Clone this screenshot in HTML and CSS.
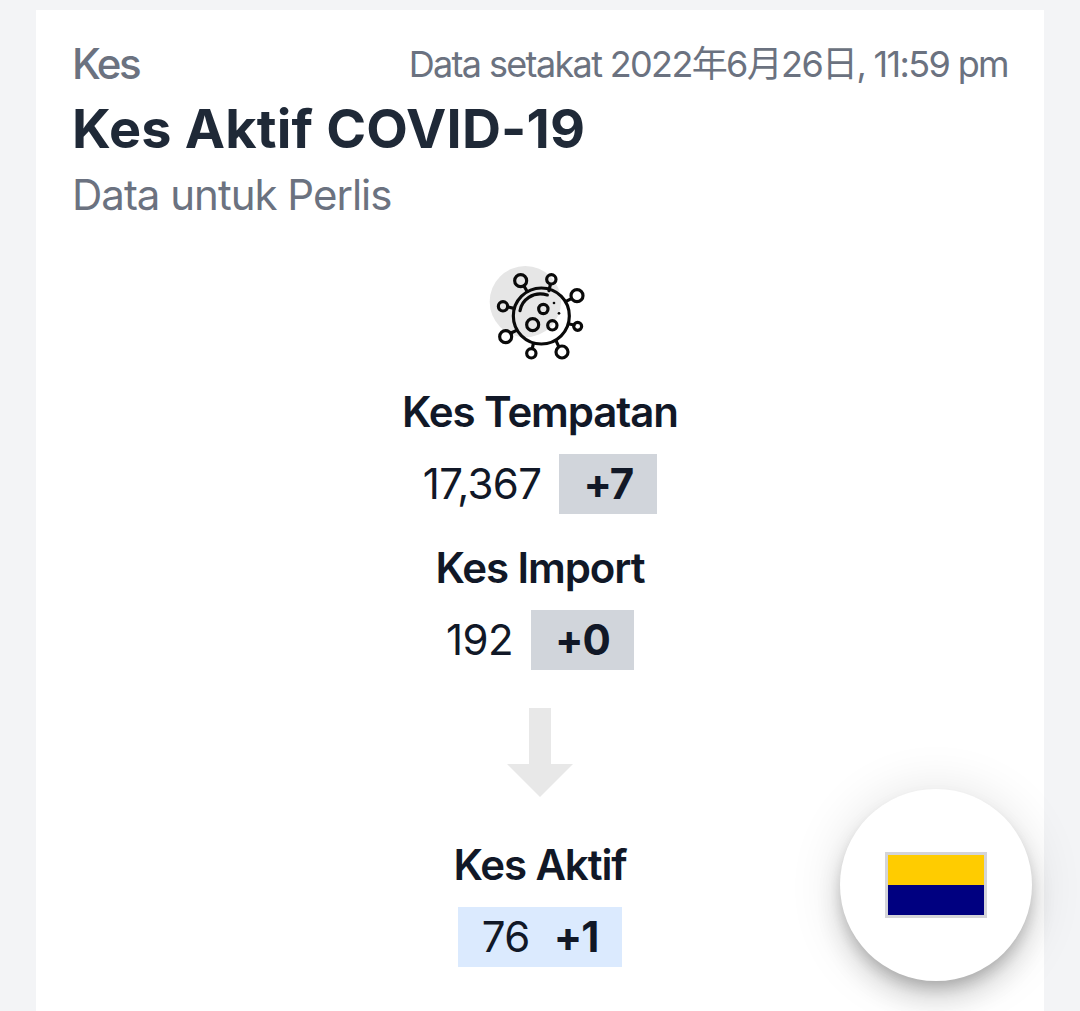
FILE: index.html
```
<!DOCTYPE html>
<html lang="ms">
<head>
  <meta charset="UTF-8" />
  <meta name="viewport" content="width=device-width, initial-scale=1.0"/>
  <title>Kes Aktif COVID-19</title>
  <link rel="stylesheet" href="styles.css">
</head>
<body>
  <main class="card">
    <header class="card-header">
      <div class="top-row">
        <span class="category">Kes</span>
        <span class="updated">Data setakat 2022年6月26日, 11:59 pm</span>
      </div>
      <h1>Kes Aktif COVID-19</h1>
      <p class="subtitle">Data untuk Perlis</p>
    </header>

    <section class="flow">
      <svg class="virus" viewBox="0 24 360 288" fill="none" stroke="#0a0a0a" stroke-width="9.500" stroke-linecap="round">
        <circle cx="136" cy="137" r="107" fill="#e6e6e6" stroke="none"/>
        <circle cx="184" cy="180" r="84"/>
        <path d="M120 164c5-31 38-60 82-47"/>
        <path d="M132 90l9 16M211 86l-4 18M274 128l-16 8M268 204l14 3M229 256l7 15M160 263l-3 14M108 224l-15 7M84 153l18 4"/>
        <circle cx="122" cy="74" r="18"/>
        <circle cx="214" cy="70" r="14"/>
        <circle cx="291" cy="119" r="18"/>
        <circle cx="293" cy="211" r="12"/>
        <circle cx="246" cy="288" r="18"/>
        <circle cx="154" cy="292" r="14"/>
        <circle cx="77" cy="242" r="18"/>
        <circle cx="69" cy="151" r="14"/>
        <circle cx="190" cy="159" r="14"/>
        <circle cx="158" cy="206" r="18"/>
        <circle cx="217" cy="208" r="14"/>
        <g fill="#0a0a0a" stroke="none">
          <circle cx="222" cy="141" r="4"/>
          <circle cx="237" cy="172" r="4"/>
        </g>
      </svg>

      <div class="stat">
        <h2>Kes Tempatan</h2>
        <div class="values">
          <span>17,367</span>
          <strong class="badge">+7</strong>
        </div>
      </div>

      <div class="stat">
        <h2>Kes Import</h2>
        <div class="values">
          <span>192</span>
          <strong class="badge">+0</strong>
        </div>
      </div>

      <svg class="arrow" viewBox="0 0 66 90">
        <path d="M22 0h22v56h22L33 89 0 56h22z" fill="#e8e8e8"/>
      </svg>

      <div class="stat">
        <h2>Kes Aktif</h2>
        <div class="values active">
          <span>76</span>
          <strong>+1</strong>
        </div>
      </div>
    </section>
  </main>

  <button class="state-button" aria-label="Perlis">
    <span class="flag"></span>
  </button>
</body>
</html>
```

FILE: styles.css
```
* {
  box-sizing: border-box;
}

body {
  margin: 0;
  padding: 10px 36px 0;
  height: 1011px;
  overflow: hidden;
  background-color: #f3f4f6;
  color: #111827;
  font-family: Inter, "Noto Sans CJK JP", sans-serif;
  font-size: 42px;
  line-height: 60px;
}

h1, h2, p {
  margin: 0;
}

.card {
  min-height: 1001px;
  padding: 24px 36px;
  background-color: #fff;
}

.card-header {
  color: #6b7280;
}

.top-row {
  display: flex;
  justify-content: space-between;
  height: 53px;
}

.category {
  font-weight: 500;
  letter-spacing: -2.4px;
}

.updated {
  font-size: 36px;
  letter-spacing: -1.65px;
}

h1 {
  color: #1f2937;
  font-size: 54px;
  font-weight: 700;
  line-height: 84px;
  letter-spacing: 0.2px;
}

.subtitle {
  line-height: 48px;
  letter-spacing: -1px;
}

.flow {
  display: flex;
  flex-direction: column;
  align-items: center;
  padding-top: 45px;
}

.virus {
  width: 120px;
  height: 96px;
  margin-bottom: 22px;
}

.stat {
  display: flex;
  flex-direction: column;
  align-items: center;
  gap: 12px;
}

.stat + .stat {
  margin-top: 24px;
}

h2 {
  font-size: 42px;
  font-weight: 600;
  line-height: 60px;
  letter-spacing: -1.1px;
}

.values {
  display: flex;
  gap: 18px;
  letter-spacing: -0.6px;
}

.values strong {
  font-weight: 700;
  letter-spacing: -1px;
}

.badge {
  padding: 0 24px;
  background-color: #d1d5db;
}

.active {
  gap: 24px;
  padding: 0 24px;
  background-color: #dbeafe;
}

.arrow {
  width: 66px;
  height: 90px;
  margin: 38px 0 37px;
}

.state-button {
  position: fixed;
  right: 48px;
  bottom: 30px;
  display: flex;
  align-items: center;
  justify-content: center;
  width: 192px;
  height: 192px;
  border: none;
  border-radius: 50%;
  background-color: #fff;
  box-shadow: 0 9px 15px -3px rgba(0,0,0,0.2), 0 18px 30px rgba(0,0,0,0.14), 0 3px 54px rgba(0,0,0,0.12);
}

.flag {
  width: 102px;
  height: 66px;
  border: 3px solid #d4d4d8;
  background: linear-gradient(#fc0 50%, #000080 50%);
}
```
